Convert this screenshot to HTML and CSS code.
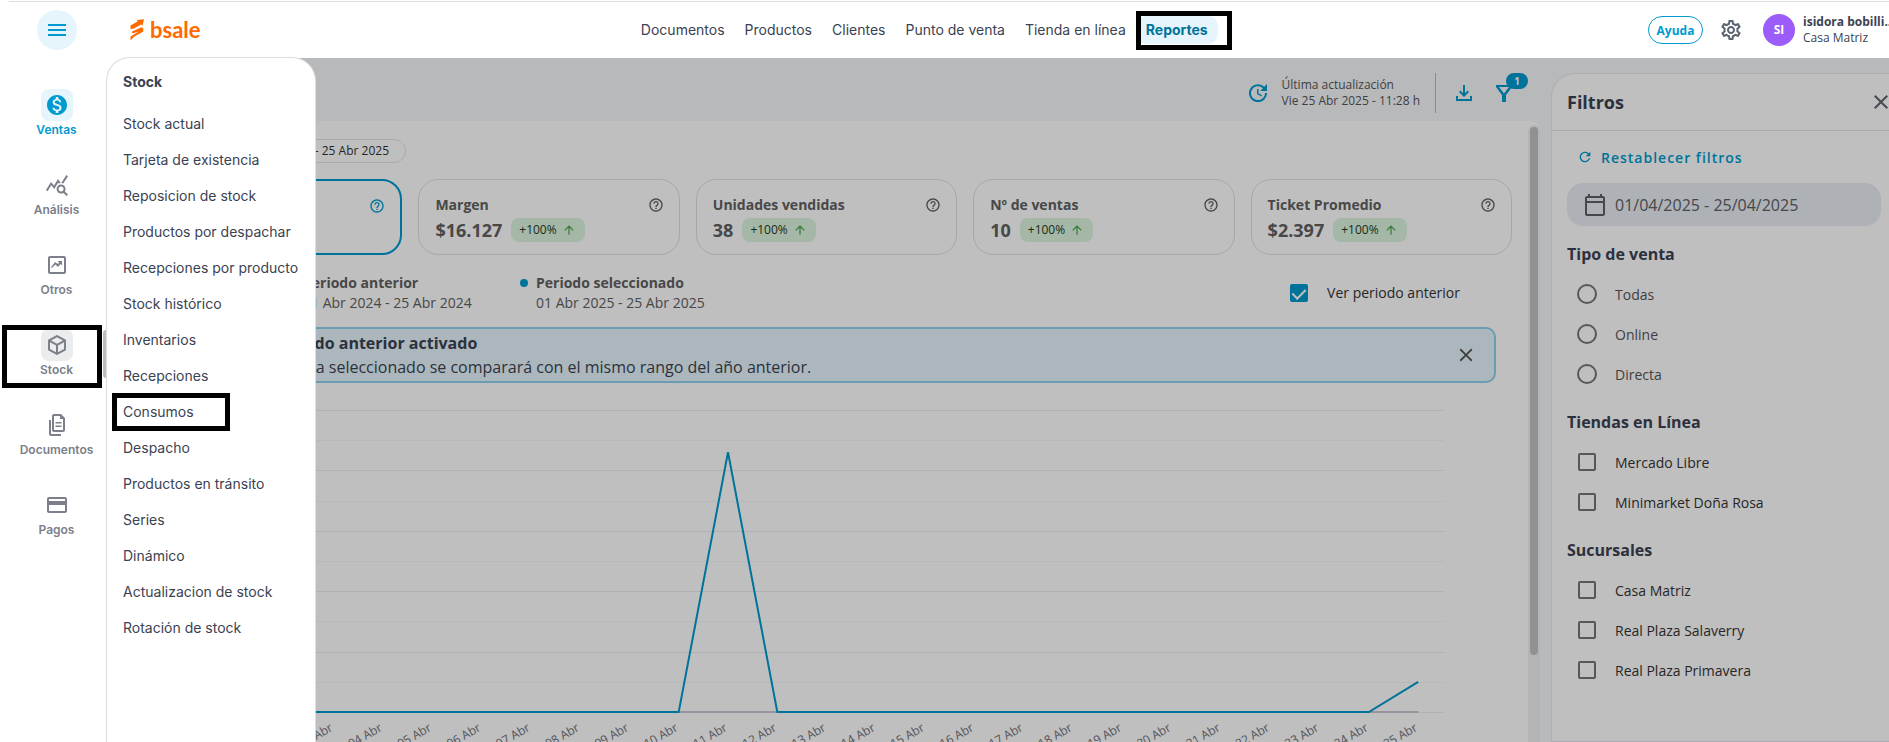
FILE: index.html
```html
<!DOCTYPE html>
<html lang="es"><head>
	<meta charset="UTF-8">
	<title>bsale - Reportes</title>
	<link rel="stylesheet" href="styles.css">
</head>

<body>
	<svg class="sprite">
		<symbol id="help" viewBox="0 0 24 24"><path d="M11 18h2v-2h-2v2zm1-16C6.48 2 2 6.48 2 12s4.48 10 10 10 10-4.48 10-10S17.52 2 12 2zm0 18c-4.41 0-8-3.59-8-8s3.59-8 8-8 8 3.59 8 8-3.59 8-8 8zm0-14c-2.21 0-4 1.79-4 4h2c0-1.1.9-2 2-2s2 .9 2 2c0 2-3 1.75-3 5h2c0-2.25 3-2.5 3-5 0-2.21-1.79-4-4-4z"/></symbol>
		<symbol id="up" viewBox="0 0 24 24"><path d="M4 12l1.41 1.41L11 7.83V20h2V7.83l5.58 5.59L20 12l-8-8-8 8z"/></symbol>
		<symbol id="close" viewBox="0 0 24 24"><path d="M19 6.41L17.59 5 12 10.59 6.41 5 5 6.41 10.59 12 5 17.59 6.41 19 12 13.41 17.59 19 19 17.59 13.41 12z"/></symbol>
	</svg>

	<header class="header">
		<button class="menu_button" aria-label="Menú">
			<svg width="24" height="24" viewBox="0 0 24 24"><path d="M3 18h18v-2H3v2zm0-5h18v-2H3v2zm0-7v2h18V6H3z"/></svg>
		</button>
		<a class="logo" href="#">
			<svg width="15" height="22" viewBox="0 0 15 22"><path d="M0.500 10V6.500L7.500 2.600L7 1L14 0.300L12.500 6.800L11.200 5.500L3.500 9.700zM0.500 21.500V17.500L8.500 12.500L3 14.300Q1.500 14 2 12.500L11 8.500Q13.500 8 13.300 10.500V12.500L4 17.700z"/></svg>
			<span>bsale</span>
		</a>
		<nav class="nav">
			<a href="#">Documentos</a>
			<a href="#">Productos</a>
			<a href="#">Clientes</a>
			<a href="#">Punto de venta</a>
			<a href="#">Tienda en línea</a>
			<a href="#" class="current">Reportes<span class="mark mark_nav"></span></a>
		</nav>
		<div class="account">
			<button class="help_button">Ayuda</button>
			<button class="icon_button gear" aria-label="Configuración">
				<svg width="24" height="24" viewBox="0 0 24 24"><path d="M19.430 12.980c.04-.32.07-.64.07-.98 0-.34-.03-.66-.07-.98l2.110-1.650c.19-.15.24-.42.12-.64l-2-3.460c-.09-.16-.26-.25-.44-.25-.06 0-.12.01-.17.03l-2.490 1c-.52-.4-1.080-.73-1.690-.98l-.38-2.650C14.460 2.180 14.250 2 14 2h-4c-.25 0-.46.18-.49.42l-.38 2.650c-.61.25-1.170.59-1.690.98l-2.490-1c-.06-.02-.12-.03-.18-.03-.17 0-.34.09-.43.25l-2 3.460c-.13.22-.07.49.12.64l2.110 1.650c-.04.32-.07.65-.07.98 0 .33.03.66.07.98l-2.110 1.650c-.19.15-.24.42-.12.64l2 3.460c.09.16.26.25.44.25.06 0 .12-.01.17-.03l2.490-1c.52.4 1.080.73 1.690.98l.38 2.650c.03.24.24.42.49.42h4c.25 0 .46-.18.49-.42l.38-2.650c.61-.25 1.170-.59 1.690-.98l2.490 1c.06.02.12.03.18.03.17 0 .34-.09.43-.25l2-3.460c.12-.22.07-.49-.12-.64l-2.110-1.650zm-1.980-1.710c.04.31.05.52.05.73 0 .21-.02.43-.05.73l-.14 1.130.89.7 1.080.84-.7 1.210-1.270-.51-1.040-.42-.9.68c-.43.32-.84.56-1.250.73l-1.060.43-.16 1.130-.2 1.350h-1.400l-.19-1.350-.16-1.130-1.060-.43c-.43-.18-.83-.41-1.230-.71l-.91-.7-1.060.43-1.270.51-.7-1.210 1.080-.84.89-.7-.14-1.130c-.03-.31-.05-.54-.05-.74s.02-.43.05-.73l.14-1.130-.89-.7-1.080-.84.7-1.210 1.270.51 1.040.42.9-.68c.43-.32.84-.56 1.250-.73l1.060-.43.16-1.130.2-1.350h1.390l.19 1.350.16 1.130 1.060.43c.43.18.83.41 1.230.71l.91.7 1.060-.43 1.270-.51.7 1.210-1.070.85-.89.7.14 1.130zM12 8c-2.210 0-4 1.790-4 4s1.790 4 4 4 4-1.790 4-4-1.790-4-4-4zm0 6c-1.100 0-2-.9-2-2s.9-2 2-2 2 .9 2 2-.9 2-2 2z"/></svg>
			</button>
			<div class="avatar">SI</div>
			<div class="user"><b>isidora bobilli...</b><span>Casa Matriz</span></div>
		</div>
	</header>

	<div class="page">
		<aside class="sidebar">
			<a href="#" class="current">
				<i><svg width="24" height="24" viewBox="0 0 24 24"><path d="M12 2C6.480 2 2 6.480 2 12s4.480 10 10 10 10-4.480 10-10S17.520 2 12 2zm1.410 16.090V20h-2.670v-1.930c-1.710-.36-3.160-1.460-3.270-3.400h1.960c.1 1.050.82 1.870 2.650 1.870 1.960 0 2.400-.98 2.400-1.590 0-.83-.44-1.610-2.670-2.140-2.480-.6-4.180-1.620-4.180-3.670 0-1.720 1.390-2.840 3.110-3.210V4h2.670v1.950c1.860.45 2.790 1.860 2.850 3.390H14.300c-.05-1.110-.64-1.870-2.220-1.870-1.500 0-2.400.68-2.400 1.640 0 .84.65 1.390 2.670 1.910s4.180 1.390 4.180 3.910c-.01 1.830-1.380 2.830-3.120 3.160z"/></svg></i>
				Ventas
			</a>
			<a href="#">
				<i><svg width="24" height="24" viewBox="0 0 24 24"><path d="M19.880 18.470c.44-.7.7-1.510.7-2.390 0-2.490-2.010-4.500-4.500-4.500s-4.500 2.010-4.500 4.500 2.010 4.500 4.490 4.500c.88 0 1.700-.26 2.390-.7L21.580 23 23 21.580l-3.120-3.110zm-3.800.11c-1.380 0-2.500-1.120-2.500-2.500s1.120-2.500 2.500-2.500 2.500 1.120 2.500 2.500-1.120 2.500-2.500 2.500zm-.36-8.500c-.74.02-1.450.18-2.100.45l-.55-.83-3.800 6.180-3.010-3.520-3.630 5.810L1 17l5-8 3 3.500L13 6l2.720 4.080zm2.590.5c-.64-.28-1.330-.45-2.050-.49L21.380 2 23 3.180l-4.690 7.400z"/></svg></i>
				Análisis
			</a>
			<a href="#">
				<i><svg width="24" height="24" viewBox="0 0 24 24"><path d="M19 3H5c-1.100 0-2 .9-2 2v14c0 1.100.9 2 2 2h14c1.100 0 2-.9 2-2V5c0-1.100-.9-2-2-2zm0 16H5V5h14v14zM6.500 15.600l3.900-4.100 2.600 2.400 2.700-2.900 1.400 1.400V8h-4.400l1.400 1.400-1.300 1.700-2.600-2.200-3.700 4.600z"/></svg></i>
				Otros
			</a>
			<a href="#" class="open">
				<i><svg width="24" height="24" viewBox="0 0 24 24"><path d="M21 16.500c0 .38-.21.71-.53.88l-7.900 4.440c-.16.120-.36.180-.57.180s-.41-.060-.57-.180l-7.900-4.440A.991.991 0 0 1 3 16.500v-9c0-.38.210-.71.530-.88l7.900-4.440c.16-.12.360-.180.570-.180s.41.060.57.180l7.900 4.440c.32.170.53.500.53.880v9zM12 4.150L6.040 7.500 12 10.850l5.960-3.350L12 4.150zM5 15.910l6 3.380v-6.710L5 9.210v6.700zm14 0v-6.700l-6 3.370v6.710l6-3.380z"/></svg></i>
				Stock
				<span class="mark mark_side"></span>
			</a>
			<a href="#">
				<i><svg width="24" height="24" viewBox="0 0 24 24"><path d="M16 1H9c-1.100 0-2 .9-2 2v14c0 1.100.9 2 2 2h9c1.100 0 2-.9 2-2V5l-4-4zm2 16H9V3h6v3h3v11zM10.500 9h6v1.500h-6zM10.500 12.500h6V14h-6zM4 7H6v14h10v2H6c-1.100 0-2-.9-2-2V7z"/></svg></i>
				Documentos
			</a>
			<a href="#">
				<i><svg width="24" height="24" viewBox="0 0 24 24"><path d="M20 4H4c-1.110 0-1.990.89-1.990 2L2 18c0 1.110.89 2 2 2h16c1.110 0 2-.89 2-2V6c0-1.110-.89-2-2-2zm0 14H4v-6h16v6zm0-10H4V6h16v2z"/></svg></i>
				Pagos
			</a>
			<span class="side_thumb"></span>
		</aside>

		<main class="main">
			<div class="toolbar">
				<svg width="24" height="24" viewBox="0 0 24 24"><path d="M21 10.120h-6.780l2.740-2.820c-2.730-2.700-7.150-2.800-9.880-.1-2.730 2.710-2.730 7.080 0 9.790s7.150 2.710 9.880 0C18.320 15.650 19 14.080 19 12.100h2c0 1.980-.88 4.550-2.640 6.290-3.510 3.480-9.210 3.480-12.720 0-3.500-3.470-3.530-9.110-.02-12.580s9.140-3.470 12.650 0L21 3v7.120zM12.500 8v4.250l3.500 2.080-.72 1.210L11 13V8h1.500z"/></svg>
				<div class="updated">Última actualización<span>Vie 25 Abr 2025 - 11:28 h</span></div>
				<button class="icon_button" aria-label="Descargar">
					<svg width="24" height="24" viewBox="0 0 24 24"><path d="M18 15v3H6v-3H4v5h16v-5h-2zm-1-4l-1.410-1.410L13 12.170V4h-2v8.170L8.410 9.590 7 11l5 5 5-5z"/></svg>
				</button>
				<button class="icon_button" aria-label="Filtros">
					<svg width="24" height="24" viewBox="0 0 24 24"><path d="M4 4h16v2l-6 8v7h-4v-7L4 6V4zm3 2l5 6.600L17 6H7z"/></svg>
					<span class="badge">1</span>
				</button>
			</div>

			<section class="report">
				<div class="chip">01 Abr 2025 - 25 Abr 2025</div>
				<div class="cards">
					<div class="card selected">
						<h3>Ventas <svg width="16" height="16"><use href="#help"/></svg></h3>
					</div>
					<div class="card">
						<h3>Margen <svg width="16" height="16"><use href="#help"/></svg></h3>
						<p>$16.127 <span>+100% <svg width="14" height="14"><use href="#up"/></svg></span></p>
					</div>
					<div class="card">
						<h3>Unidades vendidas <svg width="16" height="16"><use href="#help"/></svg></h3>
						<p>38 <span>+100% <svg width="14" height="14"><use href="#up"/></svg></span></p>
					</div>
					<div class="card">
						<h3>Nº de ventas <svg width="16" height="16"><use href="#help"/></svg></h3>
						<p>10 <span>+100% <svg width="14" height="14"><use href="#up"/></svg></span></p>
					</div>
					<div class="card">
						<h3>Ticket Promedio <svg width="16" height="16"><use href="#help"/></svg></h3>
						<p>$2.397 <span>+100% <svg width="14" height="14"><use href="#up"/></svg></span></p>
					</div>
				</div>

				<div class="legend">
					<div class="period previous"><b>Periodo anterior</b>01 Abr 2024 - 25 Abr 2024</div>
					<div class="period"><b>Periodo seleccionado</b>01 Abr 2025 - 25 Abr 2025</div>
					<label class="option compare"><input type="checkbox" checked>Ver periodo anterior</label>
				</div>

				<div class="alert">
					<div><b>Periodo anterior activado</b><p>Fecha seleccionado se comparará con el mismo rango del año anterior.</p></div>
					<button class="icon_button" aria-label="Cerrar"><svg width="22" height="22"><use href="#close"/></svg></button>
				</div>

				<svg id="chart" class="chart" viewBox="0 0 1371 380"></svg>
			</section>
			<div class="track"><div class="thumb"></div></div>
		</main>

		<aside class="filters">
			<div class="filters_head">
				<h2>Filtros</h2>
				<button class="icon_button" aria-label="Cerrar"><svg width="24" height="24"><use href="#close"/></svg></button>
			</div>
			<button class="reset">
				<svg width="16" height="16" viewBox="0 0 24 24"><path d="M17.650 6.350C16.200 4.900 14.210 4 12 4c-4.420 0-7.990 3.580-7.990 8s3.570 8 7.990 8c3.730 0 6.840-2.550 7.730-6h-2.080c-.82 2.330-3.040 4-5.650 4-3.310 0-6-2.690-6-6s2.690-6 6-6c1.660 0 3.140.69 4.220 1.780L13 11h7V4l-2.350 2.350z"/></svg>
				Restablecer filtros
			</button>
			<button class="range">
				<svg width="24" height="24" viewBox="0 0 24 24"><path d="M20 3h-1V1h-2v2H7V1H5v2H4c-1.100 0-2 .9-2 2v16c0 1.100.9 2 2 2h16c1.100 0 2-.9 2-2V5c0-1.100-.9-2-2-2zm0 18H4V10h16v11zm0-13H4V5h16v3z"/></svg>
				01/04/2025 - 25/04/2025
			</button>
			<h4>Tipo de venta</h4>
			<label class="option"><input type="radio" name="tipo">Todas</label>
			<label class="option"><input type="radio" name="tipo">Online</label>
			<label class="option"><input type="radio" name="tipo">Directa</label>
			<h4>Tiendas en Línea</h4>
			<label class="option dark"><input type="checkbox">Mercado Libre</label>
			<label class="option dark"><input type="checkbox">Minimarket Doña Rosa</label>
			<h4>Sucursales</h4>
			<label class="option dark"><input type="checkbox">Casa Matriz</label>
			<label class="option dark"><input type="checkbox">Real Plaza Salaverry</label>
			<label class="option dark"><input type="checkbox">Real Plaza Primavera</label>
		</aside>

		<div class="backdrop"></div>

		<nav class="drawer">
			<h3>Stock</h3>
			<a href="#">Stock actual</a>
			<a href="#">Tarjeta de existencia</a>
			<a href="#">Reposicion de stock</a>
			<a href="#">Productos por despachar</a>
			<a href="#">Recepciones por producto</a>
			<a href="#">Stock histórico</a>
			<a href="#">Inventarios</a>
			<a href="#">Recepciones</a>
			<a href="#">Consumos<span class="mark mark_drawer"></span></a>
			<a href="#">Despacho</a>
			<a href="#">Productos en tránsito</a>
			<a href="#">Series</a>
			<a href="#">Dinámico</a>
			<a href="#">Actualizacion de stock</a>
			<a href="#">Rotación de stock</a>
		</nav>
	</div>

	<script>
	// ventas por dia, en fraccion del maximo del eje
	const sales = new Array(25).fill(0);
	sales[10] = 0.86;
	sales[24] = 0.1;

	const left = 94, step = 49.3, top_y = 10, base = 312;
	const x = i => left + i * step;
	const y = v => base - v * (base - top_y);

	let out = '';
	for (let i = 0; i <= 10; i++) {
		const gy = Math.round(y(i / 10)) + 0.5;
		out += `<line class="${i % 2 ? 'grid minor' : 'grid'}" x1="70" x2="1303" y1="${gy}" y2="${gy}"/>`;
	}
	out += `<polyline class="line before" points="${x(0)},${base} ${x(24)},${base}"/>`;
	out += `<polyline class="line" points="${sales.map((v, i) => x(i) + ',' + y(v)).join(' ')}"/>`;
	sales.forEach((v, i) => {
		const day = String(i + 1).padStart(2, '0');
		out += `<text transform="translate(${x(i)} ${base + 18}) rotate(-30)">${day} Abr</text>`;
	});
	document.getElementById('chart').innerHTML = out;
	</script>
</body></html>
```

FILE: styles.css
```css
* {
	box-sizing: border-box;
}
body {
	margin: 0;
	height: 100vh;
	display: flex;
	flex-direction: column;
	overflow: hidden;
	background-color: #fff;
	color: #3b4252;
	font-family: "Open Sans", sans-serif;
	font-size: 14px;
}
a {
	color: inherit;
	text-decoration: none;
}
button {
	font: inherit;
	color: inherit;
	border: none;
	background: none;
	padding: 0;
	cursor: pointer;
}
svg {
	fill: currentColor;
	display: block;
	flex: none;
}
h2, h3, h4, p {
	margin: 0;
}
.sprite {
	display: none;
}

/* header */
.header {
	flex: none;
	display: flex;
	align-items: center;
	height: 58px;
	padding: 2px 0 0 37px;
	background: linear-gradient(#dedede, #dedede) 9px 1px / 100% 1px no-repeat;
}
.menu_button {
	display: flex;
	align-items: center;
	justify-content: center;
	width: 40px;
	height: 40px;
	border-radius: 50%;
	background-color: #e5f5fb;
	color: #009ace;
}
.logo {
	display: flex;
	align-items: center;
	gap: 5px;
	margin-left: 53px;
	color: #ff6a00;
	font-family: Lato, sans-serif;
	font-size: 22px;
	font-weight: 700;
	line-height: 24px;
}
.nav {
	display: flex;
	margin: 0 auto;
	font-family: Inter, sans-serif;
}
.nav a {
	position: relative;
	padding: 0 10px;
	line-height: 28px;
}
.nav .current {
	border-radius: 10px;
	background-color: #e5f5fb;
	color: #00739a;
	font-weight: 700;
}
.account {
	display: flex;
	align-items: center;
	width: 241px;
}
.help_button {
	flex: none;
	width: 55px;
	height: 28px;
	border: 1px solid #009ace;
	border-radius: 14px;
	color: #009ace;
	font-size: 12px;
	font-weight: 700;
}
.icon_button {
	position: relative;
	flex: none;
	display: flex;
}
.gear {
	margin: 0 20px 0 16px;
	color: #5c6370;
}
.avatar {
	flex: none;
	width: 32px;
	border-radius: 50%;
	background-color: #9b5cf9;
	color: #fff;
	font-size: 12px;
	font-weight: 700;
	line-height: 32px;
	text-align: center;
}
.user {
	margin-left: 8px;
	font-size: 12px;
	line-height: 16px;
	white-space: nowrap;
}
.user b, .user span {
	display: block;
}

/* hand drawn marks */
.mark {
	position: absolute;
	border: 5px solid #000;
}
.mark_nav {
	left: 0;
	top: -5px;
	width: 96px;
	height: 39px;
}
.mark_side {
	left: 2px;
	top: -4px;
	width: 100px;
	height: 63px;
}
.mark_drawer {
	left: 5px;
	top: -1px;
	width: 118px;
	height: 38px;
}

/* page */
.page {
	position: relative;
	flex: 1;
	min-height: 0;
	display: flex;
	background-color: #f5f7fa;
}
.backdrop {
	position: absolute;
	inset: 0 0 0 125px;
	background-color: rgba(0, 0, 0, 0.25);
}
.sidebar {
	position: relative;
	flex: none;
	width: 125px;
	padding: 31px 19px 0 0;
	background-color: #fff;
	color: #7b808a;
	font-family: Inter, sans-serif;
	font-size: 12px;
	font-weight: 600;
}
.sidebar a {
	position: relative;
	display: flex;
	flex-direction: column;
	align-items: center;
	height: 80px;
	padding-left: 7px;
	line-height: 18px;
}
.sidebar i {
	padding: 4px;
	border-radius: 8px;
}
.sidebar .current {
	color: #009ace;
}
.sidebar .current i {
	background-color: #e5f5fb;
}
.sidebar .open i {
	background-color: #ebecee;
}
.side_thumb {
	position: absolute;
	right: 19px;
	top: 272px;
	width: 3px;
	height: 48px;
	border-radius: 3px 0 0 3px;
	background-color: #bdbdbd;
}
.drawer {
	position: absolute;
	left: 106px;
	top: -1px;
	bottom: 0;
	width: 210px;
	border: 1px solid #dcdddf;
	border-bottom: none;
	border-radius: 24px 24px 0 0;
	background-color: #fff;
	font-family: Inter, sans-serif;
}
.drawer h3 {
	padding: 14px 16px;
	font-size: 14px;
	line-height: 20px;
}
.drawer a {
	position: relative;
	display: block;
	padding: 0 16px;
	line-height: 36px;
	white-space: nowrap;
}

/* report */
.main {
	position: relative;
	flex: 1;
	min-width: 0;
	display: flex;
	flex-direction: column;
	padding-right: 12px;
}
.toolbar {
	display: flex;
	align-items: center;
	justify-content: flex-end;
	height: 63px;
	padding: 7px 23px 0 0;
	color: #009ace;
}
.updated {
	margin: 0 16px 0 12px;
	padding: 4px 15px 4px 0;
	border-right: 1px solid #b5b8be;
	color: #555;
	font-size: 12px;
	line-height: 16px;
}
.updated span {
	display: block;
}
.toolbar .icon_button + .icon_button {
	margin-left: 16px;
}
.badge {
	position: absolute;
	left: 14px;
	top: -8px;
	width: 22px;
	border-radius: 8px;
	background-color: #009ace;
	color: #fff;
	font-size: 10px;
	font-weight: 700;
	line-height: 16px;
}
.report {
	flex: 1;
	min-height: 0;
	padding: 18px 27px 0 16px;
	border-radius: 8px 8px 0 0;
	background-color: #fff;
}
.track {
	position: absolute;
	right: 11px;
	top: 67px;
	bottom: 0;
	width: 12px;
	padding: 2px;
	background-color: #f0f0f2;
	border-radius: 6px 6px 0 0;
}
.thumb {
	height: 528px;
	border-radius: 4px;
	background-color: #c1c2c4;
}
.chip {
	width: 265px;
	padding: 0 16px;
	border: 1px solid #e3e3e3;
	border-radius: 12px;
	color: #333;
	font-size: 12px;
	line-height: 22px;
	text-align: right;
}
.cards {
	display: grid;
	grid-template-columns: repeat(5, 1fr);
	gap: 16px;
	margin-top: 16px;
}
.card {
	height: 76px;
	padding: 15px 15px 0 16px;
	border: 1px solid #e0e0e0;
	border-radius: 20px;
	color: #606060;
}
.card.selected {
	border: 2px solid #009ace;
}
.card h3 {
	display: flex;
	align-items: center;
	justify-content: space-between;
	font-size: 14px;
	line-height: 20px;
}
.card.selected svg {
	color: #009ace;
}
.card p {
	display: flex;
	align-items: center;
	gap: 9px;
	padding-top: 3px;
	font-size: 18px;
	font-weight: 700;
	line-height: 24px;
}
.card p span {
	display: flex;
	align-items: center;
	gap: 5px;
	padding: 0 9px 0 8px;
	border-radius: 8px;
	background-color: #dcf5de;
	color: #1f3a22;
	font-size: 12px;
	font-weight: 400;
}
.card p svg {
	color: #43a047;
}
.legend {
	display: flex;
	padding: 18px 52px 0 162px;
	color: #606060;
	line-height: 20px;
}
.period {
	position: relative;
}
.period b {
	display: block;
}
.period::before {
	content: "";
	position: absolute;
	left: -16px;
	top: 6px;
	width: 8px;
	height: 8px;
	border-radius: 50%;
	background-color: #009ace;
}
.period.previous {
	width: 233px;
}
.period.previous::before {
	background-color: #b3b3c0;
}
.option {
	display: flex;
	align-items: center;
	gap: 18px;
	height: 40px;
	color: #555;
}
.option input {
	appearance: none;
	flex: none;
	width: 18px;
	height: 18px;
	margin: 0 1px;
	border: 2px solid #757575;
	border-radius: 2px;
}
.option input[type="radio"] {
	width: 20px;
	height: 20px;
	margin: 0;
	border-radius: 50%;
}
.option input:checked {
	border-color: #009ace;
	background: #009ace;
}
.option input:checked::before {
	content: "";
	display: block;
	width: 6px;
	height: 11px;
	margin: 0 auto;
	border: solid #fff;
	border-width: 0 2px 2px 0;
	transform: rotate(45deg);
}
.option.compare, .option.dark {
	color: #333;
}
.compare {
	margin-left: auto;
}
.alert {
	display: flex;
	align-items: center;
	justify-content: space-between;
	height: 56px;
	margin: 14px 16px 0 0;
	padding: 0 17px 0 130px;
	border: 2px solid #8dd2ea;
	border-radius: 10px;
	background-color: #e5f5fb;
	font-size: 16px;
	line-height: 24px;
}
.alert p {
	padding-left: 8px;
}
.alert .icon_button {
	color: #555;
}
.chart {
	width: 100%;
	height: auto;
	margin-top: 17px;
}
.grid {
	stroke: #ececf0;
}
.grid.minor {
	stroke: #f6f6f8;
}
.line {
	fill: none;
	stroke: #009ace;
	stroke-width: 2;
}
.line.before {
	stroke: #c8c4d0;
}
.chart text {
	fill: #6e7079;
	font-size: 12px;
	text-anchor: end;
}

/* filters */
.filters {
	flex: none;
	width: 338px;
	margin-top: 15px;
	border: 1px solid #e6e8ee;
	border-right: none;
	border-radius: 24px 0 0 0;
	background-color: #fff;
}
.filters_head {
	display: flex;
	align-items: center;
	justify-content: space-between;
	height: 57px;
	padding-left: 15px;
	border-bottom: 1px solid #e0e3e8;
}
.filters_head .icon_button {
	margin-right: -4px;
	color: #5c6370;
}
.filters h2 {
	font-size: 18px;
}
.filters h4 {
	padding: 17px 15px 9px;
	font-size: 16px;
	line-height: 22px;
}
.filters .option {
	padding-left: 25px;
}
.reset {
	display: flex;
	align-items: center;
	gap: 8px;
	height: 36px;
	margin: 8px 0 8px 25px;
	color: #009ace;
	font-weight: 600;
	letter-spacing: 1px;
}
.range {
	display: flex;
	align-items: center;
	gap: 8px;
	width: 314px;
	height: 43px;
	margin-left: 15px;
	padding-left: 16px;
	border-radius: 16px;
	background-color: #e9edf2;
	color: #5c5f66;
	font-size: 16px;
}
```
